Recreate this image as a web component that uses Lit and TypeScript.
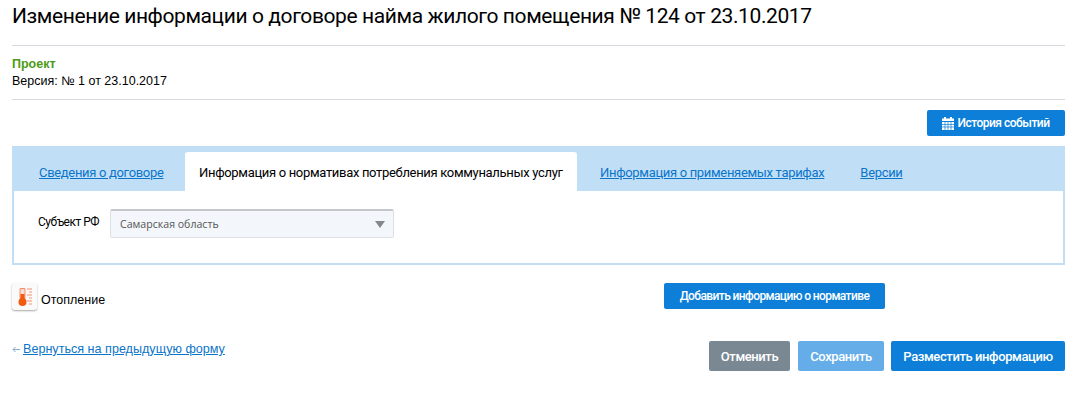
import { LitElement, html, css } from 'lit';
import { customElement } from 'lit/decorators.js';

@customElement('app-root')
export class AppRoot extends LitElement {
  static styles = css`
    :host {
      display: block;
      width: 1089px;
      height: 410px;
      box-sizing: border-box;
      padding: 0 24px 0 12px;
      background: #fff;
      color: #000;
      font-family: 'Liberation Sans', Arial, sans-serif;
      overflow: hidden;
    }
    h1 {
      margin: 0;
      height: 46px;
      box-sizing: border-box;
      padding-top: 2px;
      font: 400 21px/29px Roboto, sans-serif;
      letter-spacing: -0.4px;
      white-space: nowrap;
      border-bottom: 1px solid #d9d9e0;
    }
    .status {
      height: 54px;
      box-sizing: border-box;
      padding-top: 10px;
      font-size: 12.5px;
      line-height: 17px;
      border-bottom: 1px solid #d9d9e0;
    }
    .status b {
      display: block;
      color: #4c9a16;
    }
    .history-row {
      display: flex;
      justify-content: flex-end;
      padding: 10px 0 10px;
    }
    .btn {
      display: flex;
      align-items: center;
      justify-content: center;
      gap: 3px;
      box-sizing: border-box;
      border-radius: 2px;
      background: #0d7fd9;
      color: #fff;
      font: 500 12px/1 Roboto, sans-serif;
      letter-spacing: -0.6px;
    }
    .history {
      width: 138px;
      height: 26px;
      letter-spacing: -0.5px;
    }
    .tabs {
      height: 119px;
      box-sizing: border-box;
      padding-top: 6px;
      background: #c0dff7;
      display: flex;
      flex-direction: column;
    }
    .tab-row {
      display: flex;
      height: 39px;
      flex: none;
    }
    .tab {
      display: flex;
      align-items: center;
      padding-top: 1px;
      font: 400 13px/1 Roboto, sans-serif;
      letter-spacing: -0.32px;
      color: #0b75c9;
      text-decoration: underline;
      white-space: nowrap;
    }
    .tab.first {
      width: 173px;
      box-sizing: border-box;
      padding-left: 27px;
    }
    .tab.active {
      padding-left: 14px;
      width: 392px;
      box-sizing: border-box;
      background: #fff;
      color: #000;
      text-decoration: none;
      border-radius: 3px 3px 0 0;
    }
    .tab.third {
      padding-left: 23px;
      padding-right: 36px;
    }
    .tab-body {
      flex: 1;
      display: flex;
      background: #fff;
      margin: 0 2px 2px;
      padding: 18px 0 0 24px;
      gap: 10px;
      font: 400 12px/1 Roboto, sans-serif;
    }
    .label {
      width: 62px;
      margin-top: 7px;
      letter-spacing: -0.5px;
      white-space: nowrap;
    }
    .select {
      width: 284px;
      height: 29px;
      box-sizing: border-box;
      display: flex;
      align-items: center;
      justify-content: space-between;
      padding: 1px 8px 0 9px;
      background: #f3f6fb;
      border: 1px solid #dcdfe4;
      border-top: 2px solid #c4c7cc;
      border-radius: 2px;
      font: 400 10.6px/1 'Open Sans', sans-serif;
      color: #555;
    }
    .arrow {
      width: 0;
      height: 0;
      border-left: 5.5px solid transparent;
      border-right: 5.5px solid transparent;
      border-top: 7px solid #85888c;
    }
    .norm-row {
      display: flex;
      align-items: flex-start;
      justify-content: space-between;
      height: 76px;
      padding-top: 18px;
      box-sizing: border-box;
      padding-right: 180px;
    }
    .norm {
      display: flex;
      align-items: center;
      gap: 4px;
      font-size: 12.5px;
    }
    .norm .name {
      margin-top: 7px;
    }
    .norm-icon {
      width: 25px;
      height: 27px;
      box-sizing: border-box;
      display: flex;
      align-items: center;
      justify-content: center;
      border-radius: 3px;
      background: #fafafa;
      box-shadow: 0 1px 2px rgba(0, 0, 0, 0.35);
    }
    .add {
      width: 221px;
      height: 26px;
    }
    .footer {
      display: flex;
      align-items: flex-start;
      justify-content: space-between;
    }
    .back {
      display: flex;
      align-items: center;
      gap: 3px;
      font-size: 12.6px;
      line-height: 16px;
    }
    .back a {
      color: #0b75c9;
      text-decoration: underline;
    }
    .actions {
      display: flex;
      height: 30px;
    }
    .actions .btn {
      height: 30px;
      font-size: 13px;
      letter-spacing: -0.4px;
    }
    .actions .cancel {
      width: 81px;
      margin-right: 8px;
      background: #7a8894;
    }
    .actions .save {
      width: 86px;
      margin-right: 7px;
      background: #64ade8;
    }
    .publish {
      width: 174px;
    }
  `;

  render() {
    return html`
      <h1>Изменение информации о договоре найма жилого помещения № 124 от 23.10.2017</h1>
      <div class="status">
        <b>Проект</b>
        Версия: № 1 от 23.10.2017
      </div>
      <div class="history-row">
        <div class="btn history">
          <svg width="12" height="13" viewBox="0 0 12 13">
            <path fill="#fff" d="M2 0h2v2H2zM8 0h2v2H8zM0 1.500h12V4H0zM0 5h12v8H0z" />
            <path stroke="#0d7fd9" stroke-width=".7" d="M0 7.500h12M0 10h12M3 5v8M6 5v8M9 5v8" />
          </svg>
          История событий
        </div>
      </div>
      <div class="tabs">
        <div class="tab-row">
          <div class="tab first">Сведения о договоре</div>
          <div class="tab active">Информация о нормативах потребления коммунальных услуг</div>
          <div class="tab third">Информация о применяемых тарифах</div>
          <div class="tab">Версии</div>
        </div>
        <div class="tab-body">
          <div class="label">Субъект РФ</div>
          <div class="select">Самарская область<span class="arrow"></span></div>
        </div>
      </div>
      <div class="norm-row">
        <div class="norm">
          <span class="norm-icon">
            <svg width="18" height="20" viewBox="0 0 18 20">
              <path fill="#fcdcd0" stroke="#f4906c" d="M4 1.500h5v10h-5z" />
              <circle cx="6.500" cy="15" r="4" fill="#f25a0f" />
              <path fill="#f25a0f" d="M4.500 7h4v6h-4z" />
              <path stroke="#f4906c" d="M11 2h5M13 5h3M11 8h5M13 11h3M11 14h5M13 17h3" />
            </svg>
          </span>
          <span class="name">Отопление</span>
        </div>
        <div class="btn add">Добавить информацию о нормативе</div>
      </div>
      <div class="footer">
        <div class="back">
          <svg width="8" height="7" viewBox="0 0 8 7">
            <path fill="none" stroke="#8aa9c6" d="M8 3.500H1M3.500 1 1 3.500 3.500 6" />
          </svg>
          <a>Вернуться на предыдущую форму</a>
        </div>
        <div class="actions">
          <div class="btn cancel">Отменить</div>
          <div class="btn save">Сохранить</div>
          <div class="btn publish">Разместить информацию</div>
        </div>
      </div>
    `;
  }
}
